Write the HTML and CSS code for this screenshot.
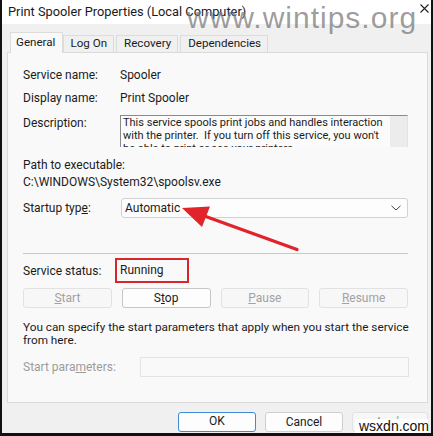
FILE: index.html
```html
<!DOCTYPE html>
<html>
<head>
<meta charset="utf-8">
<link rel="stylesheet" href="styles.css">
</head>
<body>
<div class="screen">
  <div class="window">
    <div class="titlebar">
      <span class="title">Print Spooler Properties (Local Computer)</span>
      <svg class="close" width="9" height="9" viewBox="0 0 9 9"><path d="M0.5 0.5L8.5 8.5M8.5 0.5L0.5 8.5" stroke="#222" stroke-width="1.1" fill="none"/></svg>
    </div>
    <div class="main">
      <div class="tabs">
        <div class="tab active">General</div>
        <div class="tab">Log On</div>
        <div class="tab spaced">Recovery</div>
        <div class="tab spaced">Dependencies</div>
      </div>
      <div class="panel">
        <div class="row r-name"><span class="label">Service name:</span><span class="value">Spooler</span></div>
        <div class="row r-display"><span class="label">Display name:</span><span class="value">Print Spooler</span></div>
        <div class="row r-desc">
          <span class="label">Description:</span>
          <div class="descbox">
            <div class="desctext">This service spools print jobs and handles interaction<br>with the printer.&nbsp; If you turn off this service, you won't<br>be able to print or see your printers.</div>
            <div class="scroll"></div>
          </div>
        </div>
        <div class="path-label">Path to executable:</div>
        <div class="path-value">C:\WINDOWS\System32\spoolsv.exe</div>
        <div class="row r-startup">
          <span class="label">Startup typ<u>e</u>:</span>
          <div class="select"><span>Automatic</span>
            <svg width="10" height="6" viewBox="0 0 10 6"><path d="M0.5 0.8L5 5L9.5 0.8" stroke="#444" stroke-width="1" fill="none"/></svg>
          </div>
        </div>
        <div class="sep"></div>
        <div class="row r-status"><span class="label">Service status:</span><span class="status">Running</span></div>
        <div class="btnrow">
          <div class="btn disabled"><u>S</u>tart</div>
          <div class="btn">S<u>t</u>op</div>
          <div class="btn disabled"><u>P</u>ause</div>
          <div class="btn disabled"><u>R</u>esume</div>
        </div>
        <div class="info">You can specify the start parameters that apply when you start the service<br>from here.</div>
        <div class="row r-params"><span class="label plabel">Start para<u>m</u>eters:</span><div class="pinput"></div></div>
      </div>
      <div class="footer">
        <div class="fbtn ok">OK</div>
        <div class="fbtn">Cancel</div>
        <div class="fbtn disabled">Apply</div>
      </div>
    </div>
  </div>
  <div class="watermark">www.wintips.org</div>
  <svg class="arrow" width="433" height="436" viewBox="0 0 433 436">
    <line x1="297" y1="249.5" x2="203" y2="215.5" stroke="#e0242a" stroke-width="3.4" stroke-linecap="round"/>
    <polygon points="182,208 210,206.5 202,227" fill="#e0242a"/>
  </svg>
  <div class="wsxdn">wsxdn.com</div>
</div>
</body>
</html>
```
FILE: styles.css
```css
* { box-sizing: border-box; }
html, body { margin: 0; padding: 0; background: #fff; }
body { font-family: Roboto, "Noto Sans", sans-serif; font-size: 12px; color: #1b1b1b; }

.screen { position: relative; width: 433px; height: 436px; overflow: hidden; }

.window {
  width: 433px; height: 436px;
  border-left: 2px solid #111; border-right: 2px solid #111; border-bottom: 3px solid #111;
  background: #f0f0f0;
  display: flex; flex-direction: column;
}

.titlebar {
  height: 24px; background: #fff;
  display: flex; align-items: center; justify-content: space-between;
  padding: 0 2px 2px 6px;
}
.title { font-size: 12.8px; color: #1a1a1a; }
.close { margin-top: -6px; }

.main { flex: 1; display: flex; flex-direction: column; padding: 8px 3px 0 5px; }

.tabs { display: flex; align-items: flex-end; height: 20px; padding-left: 3px; position: relative; z-index: 1; }
.tab {
  height: 17px; padding: 0 6px; line-height: 15px; font-size: 11.6px;
  border: 1px solid #dcdcdc; border-bottom: none;
  background: #f0f0f0;
}
.tab.spaced { margin-left: 2px; padding: 0 6px 0 7px; }
.tab.active { height: 21px; margin-bottom: -1px; background: #f9f9f9; line-height: 19px; padding: 0 7px 0 5px; }

.panel {
  height: 351px; border: 1px solid #dadada; background: #f9f9f9;
  padding: 14px 19px 0 15px;
  display: flex; flex-direction: column;
}

.row { display: flex; align-items: center; }
.label { width: 97px; flex: none; }
.r-name, .r-display { height: 16px; line-height: 16px; }
.r-display { margin-top: 7px; }
.r-desc { margin-top: 9px; align-items: flex-start; }
.r-desc .label { line-height: 16px; }
.descbox {
  flex: 1; height: 32px; display: flex; overflow: hidden;
  border: 1px solid #8a8a8a; border-right-color: #e2e2e2; border-bottom: none;
  background: #fbfbfb;
}
.desctext { flex: 1; padding: 0 2px; font-size: 11px; line-height: 13px; white-space: nowrap; overflow: hidden; }
.scroll { width: 17px; background: #ececec; flex: none; }

.path-label { margin-top: 10px; line-height: 17px; }
.path-value { line-height: 17px; }

.r-startup { margin-top: 7px; height: 20px; }
.select {
  flex: 1; height: 20px; margin-left: 1px;
  border: 1px solid #d2d2d2; border-radius: 3px; background: #fdfdfd;
  display: flex; align-items: center; justify-content: space-between;
  padding: 0 6px 0 3px;
}

.sep { height: 1px; background: #c8c8c8; margin-top: 35px; }

.r-status { margin-top: 4px; height: 25px; }
.status { margin-left: -5px; width: 74px; height: 25px; border: 2px solid #d7262c; padding-left: 3px; line-height: 21px; }

.btnrow { display: flex; gap: 10px; margin-top: 5px; }
.btn {
  flex: 1; height: 20px; line-height: 18px; text-align: center;
  border: 1px solid #c6c6c6; border-radius: 3px; background: #fdfdfd;
}
.btn.disabled { color: #a2a2a2; border-color: #e2e2e2; background: #f7f7f7; }

.info { margin-top: 13px; line-height: 13px; white-space: nowrap; font-size: 11.75px; }

.r-params { margin-top: 10px; height: 20px; }
.plabel { width: 117px; color: #9c9c9c; }
.pinput { flex: 1; height: 20px; margin-right: -1px; border: 1px solid #e4e4e4; background: #f9f9f9; }

.footer { display: flex; justify-content: flex-end; gap: 9px; margin-top: 9px; }
.fbtn {
  width: 78px; height: 20px; line-height: 18px; text-align: center;
  border: 1px solid #cfcfcf; border-radius: 3px; background: #fdfdfd;
}
.fbtn.ok { border: 1.5px solid #3d8ad6; line-height: 17px; }
.fbtn.disabled { width: 76px; color: #a2a2a2; border-color: #e2e2e2; background: #f7f7f7; }

.watermark {
  position: absolute; left: 187px; top: 2px;
  font-family: "Liberation Sans", sans-serif; font-size: 30px; line-height: 32px;
  letter-spacing: 1px; color: rgba(125,125,125,0.75);
}
.arrow { position: absolute; left: 0; top: 0; }
.wsxdn {
  position: absolute; left: 355px; top: 419px; width: 73px; height: 14px;
  background: #fff; font-family: "Liberation Sans", sans-serif; font-size: 14px; line-height: 14px;
  color: #111; padding-left: 4px;
}
```
